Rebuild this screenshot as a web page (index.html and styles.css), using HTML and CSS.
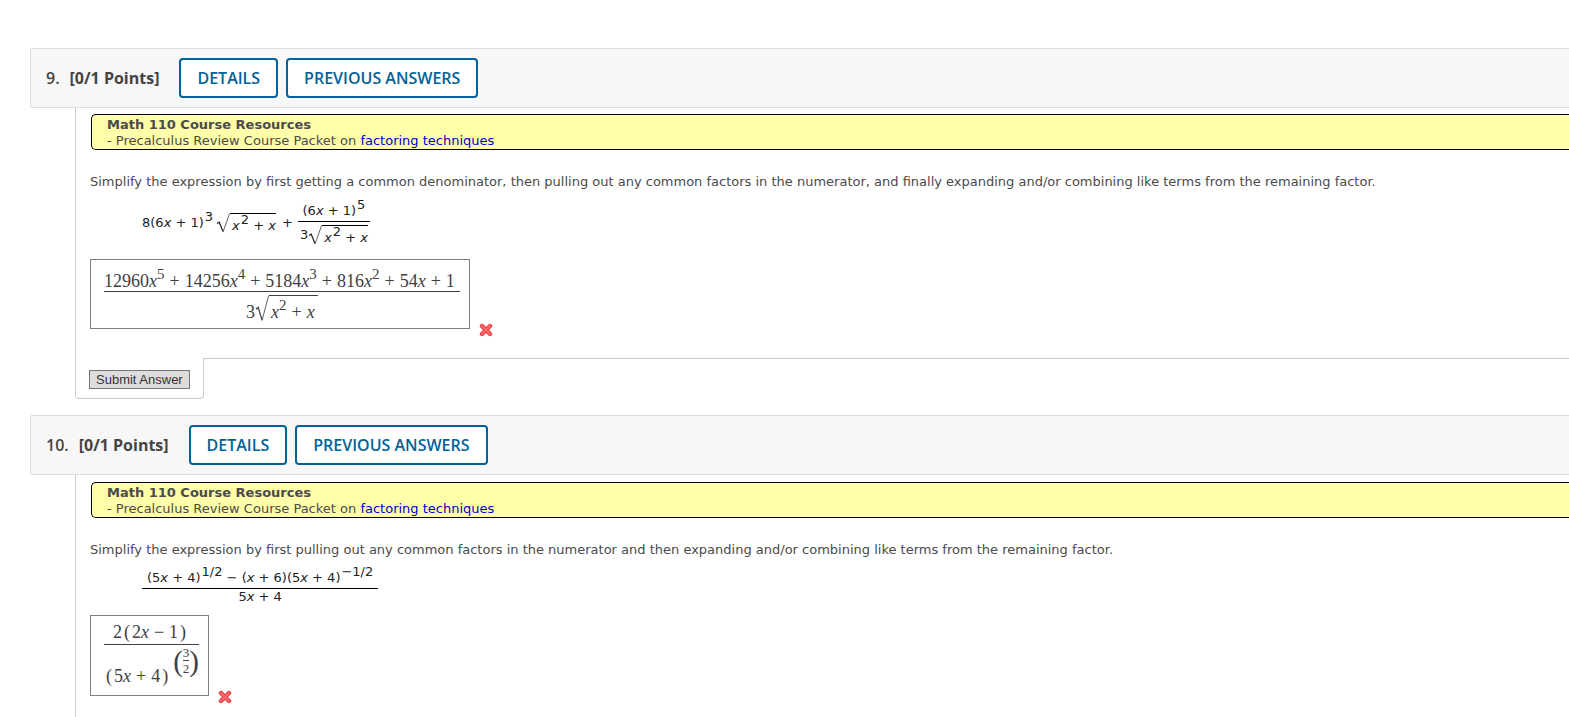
FILE: index.html
```html
<!DOCTYPE html>
<html lang="en">
<head>
<meta charset="utf-8">
<title>Math 110 Homework</title>
<link rel="stylesheet" href="styles.css">
</head>
<body>
<svg class="defs" aria-hidden="true">
  <symbol id="radical" viewBox="0 0 14 20" preserveAspectRatio="none">
    <path d="M1 10.5 L3.2 9.2 L7 18.5" fill="none" stroke="currentColor" stroke-width="1.2"/>
    <path d="M7 19 L13.6 .5" fill="none" stroke="currentColor" stroke-width=".7"/>
  </symbol>
  <symbol id="wrong" viewBox="0 0 14 14">
    <path d="M3 3 L11 11 M11 3 L3 11" fill="none" stroke="#e23535" stroke-width="4.4" stroke-linecap="round"/>
    <path d="M3 3 L11 11 M11 3 L3 11" fill="none" stroke="#ff6262" stroke-width="2.6" stroke-linecap="round"/>
  </symbol>
</svg>

<section class="question">
  <header class="question-header">
    <span class="number">9.</span>
    <span class="points">[0/1 Points]</span>
    <button class="action" type="button">DETAILS</button>
    <button class="action" type="button">PREVIOUS ANSWERS</button>
  </header>
  <div class="content">
    <div class="resources">
      <b>Math 110 Course Resources</b>
      <div>- Precalculus Review Course Packet on <a href="#">factoring techniques</a></div>
    </div>
    <p class="prompt">Simplify the expression by first getting a common denominator, then pulling out any common factors in the numerator, and finally expanding and/or combining like terms from the remaining factor.</p>
    <div class="formula with-roots">
      <span>8(6<i>x</i> + 1)<sup>3</sup></span>
      <span class="root"><svg><use href="#radical"/></svg><span class="radicand"><i>x</i><sup>2</sup> + <i>x</i></span></span>
      <span class="plus">+</span>
      <span class="fraction">
        <span class="over">(6<i>x</i> + 1)<sup>5</sup></span>
        <span class="under"><span>3</span><span class="root"><svg><use href="#radical"/></svg><span class="radicand"><i>x</i><sup>2</sup> + <i>x</i></span></span></span>
      </span>
    </div>
    <div class="answer">
      <div class="answer-box">
        <span class="fraction">
          <span class="over">12960<i>x</i><sup>5</sup><span class="op">+</span>14256<i>x</i><sup>4</sup><span class="op">+</span>5184<i>x</i><sup>3</sup><span class="op">+</span>816<i>x</i><sup>2</sup><span class="op">+</span>54<i>x</i><span class="op">+</span>1</span>
          <span class="under"><span>3</span><span class="root"><svg><use href="#radical"/></svg><span class="radicand"><i>x</i><sup>2</sup><span class="op">+</span><i>x</i></span></span></span>
        </span>
      </div>
      <svg class="mark" role="img" aria-label="Incorrect"><use href="#wrong"/></svg>
    </div>
  </div>
  <footer class="question-footer">
    <div class="submit-tab"><button class="submit" type="button">Submit Answer</button></div>
    <div class="rule"></div>
  </footer>
</section>

<section class="question">
  <header class="question-header">
    <span class="number">10.</span>
    <span class="points">[0/1 Points]</span>
    <button class="action" type="button">DETAILS</button>
    <button class="action" type="button">PREVIOUS ANSWERS</button>
  </header>
  <div class="content">
    <div class="resources">
      <b>Math 110 Course Resources</b>
      <div>- Precalculus Review Course Packet on <a href="#">factoring techniques</a></div>
    </div>
    <p class="prompt">Simplify the expression by first pulling out any common factors in the numerator and then expanding and/or combining like terms from the remaining factor.</p>
    <div class="formula">
      <span class="fraction">
        <span class="over wide">(5<i>x</i> + 4)<sup>1/2</sup> − (<i>x</i> + 6)(5<i>x</i> + 4)<sup>−1/2</sup></span>
        <span class="under simple">5<i>x</i> + 4</span>
      </span>
    </div>
    <div class="answer">
      <div class="answer-box">
        <span class="fraction">
          <span class="over plain">2<span class="paren">(</span>2<i>x</i><span class="op">−</span>1<span class="paren">)</span></span>
          <span class="under powered">
            <span class="base"><span class="paren">(</span>5<i>x</i><span class="op">+</span>4<span class="paren">)</span></span>
            <span class="exponent"><span class="tall">(</span><span class="small-fraction"><span>3</span><span>2</span></span><span class="tall">)</span></span>
          </span>
        </span>
      </div>
      <svg class="mark" role="img" aria-label="Incorrect"><use href="#wrong"/></svg>
    </div>
  </div>
</section>
</body>
</html>
```
FILE: styles.css
```css
* { box-sizing: border-box; }

body {
  display: flex;
  flex-direction: column;
  gap: 16px;
  min-height: 100vh;
  margin: 0;
  padding: 48px 0 0 30px;
  background: #fff;
  color: #4a4a4a;
  font: 13px/16px "DejaVu Sans", Verdana, sans-serif;
}

.defs { position: absolute; width: 0; height: 0; }

.question { display: flex; flex-direction: column; }
.question:last-of-type { flex: 1; }
.question:last-of-type .content { flex: 1; padding: 7px 0 0 14px; }

.question-header {
  display: flex;
  align-items: center;
  height: 60px;
  padding-left: 15px;
  border: 1px solid #ddd;
  border-right: 0;
  border-radius: 2px 0 0 2px;
  background: #f7f7f7;
  color: #444;
  font: 700 16px/24px "Open Sans", sans-serif;
}
.number { margin-right: 10px; font-weight: 600; }
.points { margin-right: 20px; }

.action {
  height: 40px;
  margin-right: 8px;
  padding: 0 16px;
  border: 2px solid #006298;
  border-radius: 4px;
  background: #fff;
  color: #006298;
  font: 600 16px/24px "Open Sans", sans-serif;
}

.content {
  margin-left: 45px;
  padding: 6px 0 29px 14px;
  border-left: 1px solid #ccc;
}

.resources {
  margin-left: 1px;
  padding: 2px 15px 0;
  border: 1px solid #000;
  border-right: 0;
  border-radius: 5px 0 0 5px;
  background: #ffffaa;
}
.resources a { color: #0000cc; text-decoration: none; }

.prompt { margin: 24px 0 9px; }

.formula {
  display: flex;
  align-items: center;
  margin-left: 52px;
  color: #222;
  white-space: nowrap;
}
.with-roots { padding: 1px 0 4px; }
.with-roots > .root { margin-left: 3px; }
.plus { margin: 0 5px 0 6px; }

sup { margin-left: 1px; font-size: 13px; line-height: 0; vertical-align: 6px; }

.fraction { display: flex; flex-direction: column; }
.over { padding: 3px 3px 2px; border-bottom: 1px solid #000; text-align: center; }
.wide { padding: 3px 5px 2px; }
.under { display: flex; align-items: center; justify-content: center; padding: 3px 2px 0; }
.simple { display: block; padding: 0; text-align: center; }

.root { display: flex; }
.root svg { width: 14px; height: 20px; }
.radicand { height: 20px; padding: 4px 0 0 2px; border-top: 1px solid #000; }

.answer { display: flex; align-items: flex-end; margin-top: 10px; }
.answer-box {
  padding: 6px 9px 6px 13px;
  border: 1px solid #808080;
  color: #404040;
  font: 18px/20px "Liberation Serif", serif;
  white-space: nowrap;
}
.answer-box sup { margin-left: 0; font-size: 15px; vertical-align: 8px; }
.answer-box .over { padding: 5px 5px 0 0; border-color: #404040; }
.answer-box .plain { padding: 0 2px 2px 0; }
.answer-box .under { align-items: flex-end; }
.answer-box .root svg { height: 27px; }
.answer-box .radicand { height: 27px; padding: 6px 3px 0 2px; border-color: #404040; }
.op { margin: 0 5px; }
.paren { margin: 0 2px; }

.answer-box .powered { padding: 0 0 3px; }
.exponent { display: flex; align-items: center; margin: 0 0 10px 3px; }
.tall { font-size: 29px; line-height: 28px; }
.small-fraction { display: flex; flex-direction: column; font-size: 13px; line-height: 15px; }
.small-fraction span + span { border-top: 1px solid #404040; }

.mark { width: 14px; height: 14px; margin: 0 0 -8px 9px; }

.question-footer { display: flex; margin-left: 45px; }
.submit-tab {
  padding: 12px 13px 9px 13px;
  border: 1px solid #ccc;
  border-top: 0;
  border-radius: 0 0 4px 4px;
}
.rule { flex: 1; border-top: 1px solid #ccc; }
.submit {
  display: block;
  height: 19px;
  padding: 0 6px;
  border: 1px solid #767676;
  border-radius: 0;
  background: #ddd;
  color: #333;
  font: 13px/16px "Liberation Sans", Arial, sans-serif;
}
```
